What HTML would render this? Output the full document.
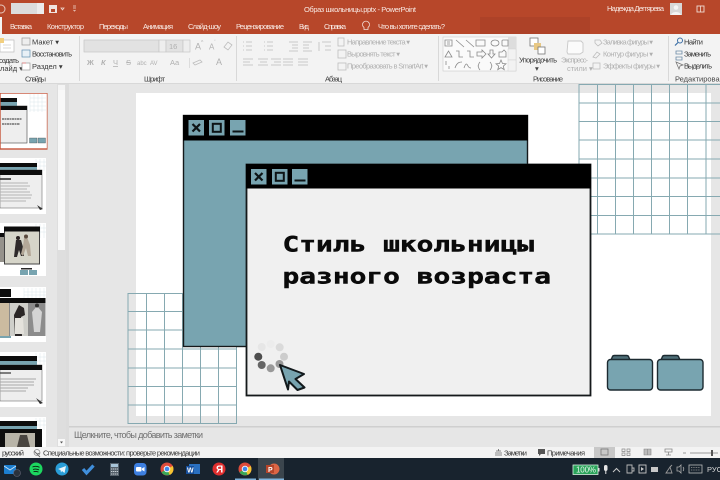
<!DOCTYPE html>
<html lang="ru"><head><meta charset="utf-8"><title>Образ школьницы.pptx - PowerPoint</title>
<style>
html,body{margin:0;padding:0;width:720px;height:480px;overflow:hidden;background:#e6e6e6}
svg{display:block;font-family:"Liberation Sans","Noto Sans CJK SC",sans-serif}
.w{fill:#f8e8e2;font-size:7.5px}
.d{fill:#3a3a3a;font-size:7.5px}
.g{fill:#b0b0b0;font-size:7.5px}
.l{fill:#444;font-size:7.5px}
.ic{fill:none;stroke:#8a8a8a;stroke-width:.8}
.dis{fill:none;stroke:#bdbdbd;stroke-width:.8}
.pix{font-family:'DejaVu Sans Mono','Liberation Mono',monospace;font-weight:bold;font-size:21px;fill:#0a0a0a;stroke:#0a0a0a;stroke-width:.45}
</style></head><body>
<svg width="720" height="480" viewBox="0 0 720 480" xmlns="http://www.w3.org/2000/svg">
<defs><filter id="b" x="0" y="0" width="100%" height="100%"><feGaussianBlur stdDeviation="0.3"/></filter></defs>

<!-- backgrounds -->
<rect width="720" height="480" fill="#e6e6e6"/>
<rect x="0" y="0" width="720" height="34" fill="#b7472a"/>
<rect x="480" y="17" width="110" height="17" fill="#ad4228"/>
<rect x="0" y="34" width="720" height="49" fill="#f3f3f3"/>
<rect x="0" y="83" width="720" height="1" fill="#d8d8d8"/>

<g filter="url(#b)">
<!-- title bar -->
<circle cx="1" cy="9" r="4" fill="none" stroke="#e8c8bd" stroke-width="1"/>
<rect x="11" y="3" width="33" height="11" fill="#dcdcdc"/>
<rect x="37" y="3" width="7" height="11" fill="#ececec"/>
<rect x="49" y="5" width="8" height="8" fill="#f0e4e0"/><rect x="51" y="9" width="4" height="3" fill="#b7472a"/>
<path d="M61 8h3l-1.500 2zM73 6h3M73 8h3M73.500 10l1 1 1-1" fill="none" stroke="#eed8d0" stroke-width=".8"/>
<text x="304" y="12" class="w" textLength="112">Образ школьницы.pptx  -  PowerPoint</text>
<text x="607" y="11" class="w" textLength="57">Надежда Дегтярева</text>
<rect x="670" y="3" width="12" height="12" fill="#d8d8d8"/><circle cx="676" cy="7.500" r="2.300" fill="#f4f4f4"/><path d="M671 15c1-4 9-4 10 0z" fill="#f4f4f4"/>
<rect x="697" y="6" width="7" height="6" fill="none" stroke="#f0dcd4" stroke-width=".9"/><path d="M700.500 6v6" stroke="#f0dcd4" stroke-width=".8"/>

<!-- tabs -->
<rect x="0" y="17" width="2" height="17" fill="#f3f3f3"/>
<text x="10" y="29" class="w" textLength="22">Вставка</text>
<text x="47" y="29" class="w" textLength="37">Конструктор</text>
<text x="99" y="29" class="w" textLength="29">Переходы</text>
<text x="143" y="29" class="w" textLength="30">Анимация</text>
<text x="188" y="29" class="w" textLength="33">Слайд-шоу</text>
<text x="236" y="29" class="w" textLength="48">Рецензирование</text>
<text x="299" y="29" class="w" textLength="10">Вид</text>
<text x="324" y="29" class="w" textLength="22">Справка</text>
<path d="M364 27.500a3.500 3.500 0 1 1 4 0v2h-4z" fill="none" stroke="#f2ddd5" stroke-width=".8"/>
<text x="378" y="29" class="w" textLength="67">Что вы хотите сделать?</text>

<!-- Слайды group -->
<rect x="0" y="40" width="14" height="12" fill="#fff" stroke="#bbb" stroke-width=".7"/>
<rect x="0" y="38" width="4" height="5" fill="#f2cf7f"/>
<path d="M3 45h8M3 48h8" stroke="#ccc" stroke-width=".8"/>
<text x="-1" y="63" class="d" textLength="20">оздать</text>
<text x="0" y="71" class="d">лайд ▾</text>
<rect x="22" y="38" width="8" height="7" fill="#eee" stroke="#999" stroke-width=".7"/>
<text x="32" y="44.500" class="d">Макет ▾</text>
<rect x="22" y="50" width="8" height="7" fill="#e8f0f6" stroke="#5f8db0" stroke-width=".7"/>
<text x="32" y="56.500" class="d" textLength="40">Восстановить</text>
<rect x="22" y="63" width="8" height="7" fill="#fff" stroke="#999" stroke-width=".7"/><path d="M22 63h4" stroke="#d88" stroke-width="1"/>
<text x="32" y="69" class="d">Раздел ▾</text>
<text x="25" y="81.500" class="l" textLength="21">Слайды</text>
<rect x="79" y="36" width="1" height="45" fill="#d8d8d8"/>

<!-- Шрифт -->
<rect x="84" y="40" width="75" height="12" fill="#e2e2e2" stroke="#c6c6c6" stroke-width=".7"/>
<rect x="159" y="40" width="7" height="12" fill="#eeeeee" stroke="#c6c6c6" stroke-width=".7"/>
<rect x="166" y="40" width="17" height="12" fill="#e2e2e2" stroke="#c6c6c6" stroke-width=".7"/>
<rect x="183" y="40" width="7" height="12" fill="#eeeeee" stroke="#c6c6c6" stroke-width=".7"/>
<text x="169" y="49" class="g">16</text>
<text x="195" y="49.500" class="g" style="font-size:9px">A</text><text x="201" y="44" class="g" style="font-size:5px">^</text>
<text x="209" y="49.500" class="g" style="font-size:8px">A</text><text x="214" y="44" class="g" style="font-size:5px">ˇ</text>
<path d="M224 47l4-5 4 3-4 5z" class="dis"/>
<g class="g" style="font-size:7.500px">
<text x="87" y="65" font-weight="bold">Ж</text><text x="101" y="65" font-style="italic" font-weight="bold">К</text><text x="113" y="65" text-decoration="underline">Ч</text><text x="126" y="65" text-decoration="line-through">S</text><text x="137" y="65" style="font-size:6px">abc</text><text x="150" y="65" style="font-size:6px">AV</text><text x="170" y="65">Aa</text><text x="216" y="65" style="font-size:9px">A</text>
</g>
<path d="M193 63l7-3 2 2-7 3z" class="dis" stroke-width="1.200"/>
<rect x="189" y="58" width="1" height="10" fill="#dcdcdc"/>
<text x="144" y="81.500" class="l" textLength="21">Шрифт</text>
<rect x="236" y="36" width="1" height="45" fill="#d8d8d8"/>

<!-- Абзац -->
<path class="dis" d="M243 42h1M246 42h6M243 46h1M246 46h6M243 50h1M246 50h6M264 42h1M267 42h6M264 46h1M267 46h6M264 50h1M267 50h6M289 42h9M292 45h6M292 48h6M289 51h9M303 42h9M303 45h6M303 48h6M303 51h9M322 42h9M325 46h6M325 50h6M319 42v9"/>
<path class="dis" d="M243 59h10M243 62h7M243 65h10M258 59h10M260 62h7M258 65h10M271 59h10M274 62h7M271 65h10M283 59h10M283 62h10M283 65h10M298 59h10M298 62h10M298 65h10"/>
<rect x="338" y="38" width="6" height="8" class="dis"/><rect x="338" y="50" width="8" height="8" class="dis"/><rect x="338" y="63" width="8" height="7" class="dis"/>
<text x="347" y="44.500" class="g" textLength="63">Направление текста ▾</text>
<text x="347" y="56.500" class="g" textLength="53">Выровнять текст ▾</text>
<text x="347" y="68.500" class="g" textLength="81">Преобразовать в SmartArt ▾</text>
<text x="325" y="81.500" class="l" textLength="17">Абзац</text>
<rect x="438" y="36" width="1" height="45" fill="#d8d8d8"/>

<!-- Рисование -->
<rect x="443" y="37" width="73" height="34" fill="#fafafa" stroke="#d0d0d0" stroke-width=".7"/>
<rect x="508" y="37" width="8" height="12" fill="#dddddd"/>
<rect x="508" y="49" width="8" height="11" fill="#f2f2f2" stroke="#d0d0d0" stroke-width=".5"/>
<rect x="508" y="60" width="8" height="11" fill="#f2f2f2" stroke="#d0d0d0" stroke-width=".5"/>
<path class="ic" d="M445 40h7v6h-7zM447 42h3M447 44h3M456 40l8 7M466 40l8 7M476 40h9v6h-9zM491 43a4 3 0 1 0 8 0a4 3 0 1 0-8 0M502 41a1 1 0 0 1 1-1h5v6h-5a1 1 0 0 1-1-1z"/>
<path class="ic" d="M445 57l3.500-6 3.500 6zM456 51h3v6h4M467 51h3v6h4M477 52h5v-2l4 4-4 4v-2h-5zM490 50h3v4h2l-3.500 4-3.500-4h2zM499 57v-5h3l2-2 2 2v5z"/>
<path class="ic" d="M446 61v4M449 66v3M455 68c2-6 5-6 7-6M464 68c2-6 3-4 4-2s2 2 3 2M480 62c-2 2-1 3-2 4 1 1 0 2 2 4M490 62c2 2 1 3 2 4-1 1 0 2-2 4M501 60l1.500 3.500 3.500.3-2.700 2.300.9 3.500-3.200-2-3.200 2 .9-3.500-2.700-2.300 3.500-.3z"/>
<rect x="530" y="38" width="8" height="8" fill="#fff" stroke="#777" stroke-width=".8"/>
<rect x="534" y="43" width="7" height="7" fill="#e8c884"/>
<rect x="538" y="47" width="7" height="7" fill="#fff" stroke="#777" stroke-width=".8"/>
<text x="519" y="62.500" class="d" textLength="38">Упорядочить</text>
<text x="535" y="71" class="l">▾</text>
<path d="M568 41h13l2 2v9l-3 2h-12l-1-2z" fill="#fbfbfb" stroke="#c8c8c8" stroke-width=".9"/>
<text x="561" y="62.500" class="g" textLength="27">Экспресс-</text>
<text x="567" y="71" class="g">стили ▾</text>
<path class="dis" d="M595 40h5l2 3-4 3-3-3zM593 57l4-5 3 2-4 4zM593 63h7v6h-7z"/>
<text x="603" y="44.500" class="g" textLength="50">Заливка фигуры ▾</text>
<text x="603" y="56.500" class="g" textLength="50">Контур фигуры ▾</text>
<text x="603" y="68.500" class="g" textLength="57">Эффекты фигуры ▾</text>
<text x="533" y="81.500" class="l" textLength="30">Рисование</text>
<rect x="668" y="36" width="1" height="45" fill="#d8d8d8"/>

<!-- Редактирование -->
<circle cx="680" cy="40.500" r="2.500" fill="none" stroke="#3a6ea5" stroke-width="1"/><path d="M678 42.500l-3 3" stroke="#3a6ea5" stroke-width="1.200"/>
<path d="M676 51h6v3h-6zM676 57h6v3h-6z" fill="none" stroke="#6b8aa5" stroke-width=".8"/>
<path d="M676 62l3 7 1-3 3-1z" fill="none" stroke="#777" stroke-width=".8"/>
<text x="684" y="44.500" class="d" textLength="19">Найти</text>
<text x="684" y="56.500" class="d" textLength="27">Заменить</text>
<text x="684" y="68.500" class="d" textLength="28">Выделить</text>
<text x="675" y="81.500" class="l">Редактирования</text>
</g>

<!-- thumbnail pane -->
<rect x="57" y="84" width="9" height="363" fill="#dedede"/>
<rect x="58" y="90" width="7" height="160" fill="#f8f8f8"/>
<rect x="58" y="85" width="7" height="5" fill="#f4f4f4"/>
<rect x="58" y="439" width="7" height="7" fill="#f8f8f8"/><path d="M60 441.500h3l-1.500 2z" fill="#555"/>
<rect x="66" y="84" width="3" height="363" fill="#dcdcdc"/>

<g filter="url(#b)">
<!-- thumb 1 -->
<rect x="0" y="93" width="47" height="56" fill="#fff"/>
<path d="M30 94v18M34 94v18M38 94v18M42 94v18M30 98h16M30 102h16M30 106h16M30 110h16" stroke="#dbe7ea" stroke-width=".5"/>
<rect x="0" y="98" width="17" height="4" fill="#0a0a0a"/><rect x="0" y="102" width="17" height="4" fill="#78a4b0"/>
<rect x="0" y="106" width="27" height="37" fill="#eeeeee" stroke="#444" stroke-width=".6"/><rect x="0" y="106" width="27" height="4" fill="#0a0a0a"/>
<path d="M2 119h20M2 124h18" stroke="#555" stroke-width="1.200" stroke-dasharray="2 .5"/>
<rect x="29.500" y="138" width="7.500" height="5" fill="#78a4b0" stroke="#333" stroke-width=".3"/><rect x="38" y="138" width="7.500" height="5" fill="#78a4b0" stroke="#333" stroke-width=".3"/>
<rect x="0" y="93" width="47.500" height="56" fill="none" stroke="#c6553a" stroke-width="1.400"/>

<!-- thumb 2 -->
<rect x="0" y="158" width="46" height="56" fill="#fff"/>
<path d="M36 159v12M40 159v12M44 159v12M36 162h10M36 166h10" stroke="#dbe7ea" stroke-width=".5"/>
<rect x="0" y="163" width="37" height="4" fill="#0a0a0a"/><rect x="0" y="167" width="37" height="3" fill="#78a4b0"/>
<rect x="0" y="170" width="42" height="38" fill="#eeeeee" stroke="#555" stroke-width=".5"/><rect x="0" y="170" width="42" height="5" fill="#0a0a0a"/>
<path d="M0 179h11" stroke="#333" stroke-width="1.600"/>
<path d="M0 183h28M0 186h30M0 189h27M0 192h30M0 195h32M0 198h31M0 201h26" stroke="#b4b4b4" stroke-width="1"/>
<path d="M37 205l6 4-3 1z" fill="#333"/>

<!-- thumb 3 -->
<rect x="0" y="223" width="46" height="53" fill="#fff"/>
<path d="M36 224v14M40 224v14M44 224v14M36 228h10M36 232h10" stroke="#dbe7ea" stroke-width=".5"/>
<rect x="0" y="233" width="5" height="4" fill="#0a0a0a"/>
<rect x="0" y="237" width="4" height="25" fill="#95928b"/>
<rect x="4" y="226.500" width="36" height="38" fill="#444"/>
<rect x="4" y="226.500" width="36" height="5" fill="#0a0a0a"/>
<rect x="5" y="231.500" width="34" height="32" fill="#d6d5c9"/>
<path d="M16 240l5 0 2 7 1 9h-3l-2-6-2 7h-3l1-9z" fill="#2f2b2a"/><circle cx="18" cy="238" r="2" fill="#2a2422"/>
<path d="M24 238l3-1 3 8 1 11h-3l-2-8-3 8-2-2 2-8z" fill="#b4a898"/><circle cx="26" cy="236.500" r="2" fill="#5a4a3e"/>
<rect x="21" y="268" width="11" height="1.500" fill="#2a2a2a"/>
<rect x="20" y="270" width="8" height="5" fill="#78a4b0"/><rect x="29" y="270" width="8" height="5" fill="#78a4b0"/>

<!-- thumb 4 -->
<rect x="0" y="287" width="46" height="55" fill="#fff"/>
<path d="M24 288v10M28 288v10M32 288v10M36 288v10M40 288v10M44 288v10M24 292h22M24 295h22" stroke="#dbe7ea" stroke-width=".5"/>
<rect x="0" y="289" width="11" height="8" fill="#0a0a0a"/>
<rect x="0" y="298" width="45.500" height="5" fill="#0a0a0a"/>
<rect x="0" y="303" width="45.500" height="33" fill="#8a8a8a"/>
<rect x="0" y="303" width="9" height="33" fill="#cbbba0"/>
<rect x="10" y="303" width="18" height="33" fill="#cfcfca"/>
<path d="M14 315l5-10 5 3 1 7-4 2 1 19h-7z" fill="#2a2626"/><path d="M15 318h8l1 16h-9z" fill="#e4e2dc"/>
<rect x="29" y="303" width="16" height="33" fill="#8c8c8c"/>
<path d="M32 312l5-6 5 6-1 10-1 10h-6l-1-10z" fill="#d4d4d4"/><circle cx="37" cy="305.500" r="2" fill="#333"/>
<rect x="0" y="336" width="11" height="2" fill="#78a4b0"/>

<!-- thumb 5 -->
<rect x="0" y="352" width="46" height="55" fill="#fff"/>
<path d="M36 353v12M40 353v12M44 353v12M36 357h10M36 361h10" stroke="#dbe7ea" stroke-width=".5"/>
<rect x="0" y="356" width="37" height="5" fill="#0a0a0a"/><rect x="0" y="361" width="37" height="4" fill="#78a4b0"/>
<rect x="0" y="365" width="42" height="36" fill="#eeeeee" stroke="#555" stroke-width=".5"/><rect x="0" y="365" width="42" height="5" fill="#0a0a0a"/>
<path d="M0 373h11" stroke="#333" stroke-width="1.200"/>
<path d="M0 379h36M0 382h34M0 385h34M0 388h28M0 391h26" stroke="#a8a8a8" stroke-width="1"/>
<path d="M36 398l7 5-3 1z" fill="#333"/>

<!-- thumb 6 -->
<rect x="0" y="417" width="46" height="30" fill="#fff"/>
<path d="M36 418v12M40 418v12M44 418v12M36 421h10M36 425h10" stroke="#dbe7ea" stroke-width=".5"/>
<rect x="0" y="421" width="37" height="5" fill="#0a0a0a"/><rect x="0" y="426" width="37" height="3" fill="#78a4b0"/>
<rect x="0" y="429" width="42" height="18" fill="#0a0a0a"/>
<rect x="5" y="433" width="30" height="14" fill="#b8b4a8"/><path d="M17 447l3-12h7l3 12z" fill="#4a4440"/>
</g>

<!-- Slide -->
<rect x="136" y="93" width="575" height="323" fill="#ffffff"/>
<path d="M579 84v150M597.500 84v150M615.500 84v150M633.500 84v150M651.500 84v150M669.500 84v150M687.500 84v150M706 84v150M579 84.500h141M579 103h141M579 121.500h141M579 140h141M579 159h141M579 178h141M579 196.500h141M579 215.500h141M579 234h141" fill="none" stroke="#86a9b1" stroke-width="1"/>
<path d="M128 293v131M146.500 293v131M164.500 293v131M182.500 293v131M200.500 293v131M218.500 293v131M236.500 293v131M128 293.500h108.500M128 311.500h108.500M128 330h108.500M128 349h108.500M128 368h108.500M128 386.500h108.500M128 405h108.500M128 423.500h108.500" fill="none" stroke="#86a9b1" stroke-width="1"/>

<!-- back window -->
<rect x="183.500" y="115.500" width="344" height="231" fill="#78a4b0" stroke="#15191b" stroke-width="1.400"/>
<rect x="183" y="115" width="345" height="25.500" fill="#000"/>
<g>
<rect x="188.500" y="120" width="15.500" height="15.500" fill="#78a4b0"/><path d="M192.500 124l7.500 7.500M200 124l-7.500 7.500" stroke="#0d1416" stroke-width="2.200"/>
<rect x="209" y="120" width="15.500" height="15.500" fill="#78a4b0"/><rect x="212.800" y="123.800" width="8" height="8" fill="none" stroke="#0d1416" stroke-width="2"/>
<rect x="230" y="120" width="15.500" height="15.500" fill="#78a4b0"/><path d="M232.500 131.500h11" stroke="#0d1416" stroke-width="2"/>
</g>

<!-- front window -->
<rect x="246.500" y="164.500" width="344" height="231" fill="#f0f0f0" stroke="#15191b" stroke-width="1.800"/>
<rect x="246" y="164" width="345" height="24.500" fill="#000"/>
<rect x="251" y="169" width="15.500" height="15.500" fill="#78a4b0"/><path d="M255 173l7.500 7.500M262.500 173l-7.500 7.500" stroke="#0d1416" stroke-width="2.200"/>
<rect x="272" y="169" width="15.500" height="15.500" fill="#78a4b0"/><rect x="275.800" y="172.800" width="8" height="8" fill="none" stroke="#0d1416" stroke-width="2"/>
<rect x="292" y="169" width="15.500" height="15.500" fill="#78a4b0"/><path d="M294.500 180.500h11" stroke="#0d1416" stroke-width="2"/>

<text x="282.500" y="251.500" textLength="251.500" lengthAdjust="spacingAndGlyphs" class="pix">Стиль школьницы</text>
<text x="282.500" y="283.500" textLength="268.500" lengthAdjust="spacingAndGlyphs" class="pix">разного возраста</text>

<!-- spinner -->
<circle cx="270.700" cy="344" r="4" fill="#ececec"/><circle cx="261.700" cy="347" r="4" fill="#e6e6e6"/>
<circle cx="279.700" cy="347.300" r="4" fill="#dadada"/><circle cx="284" cy="356.700" r="4" fill="#cccccc"/>
<circle cx="279.500" cy="364" r="4" fill="#999"/><circle cx="270.700" cy="368.300" r="4" fill="#999999"/>
<circle cx="261.700" cy="365" r="4" fill="#666"/><circle cx="258.300" cy="356.700" r="4" fill="#4e4e4e"/>
<!-- cursor -->
<path d="M280 365L304 374L295.500 379L304.500 387.500L297.500 390L289 381.500L288 389.500Z" fill="#78a4b0" stroke="#12191c" stroke-width="2" stroke-linejoin="round"/>

<!-- folders -->
<g stroke="#1c2a30" stroke-width="1.400" stroke-linejoin="round">
<path d="M611 360l1.500-3.500q.5-1 2-1h12q1.500 0 2 1l1.500 3.500z" fill="#4f6f79"/>
<rect x="607.500" y="359.500" width="45" height="30.500" rx="3" fill="#78a4b0"/>
<path d="M661 360l1.500-3.500q.5-1 2-1h12q1.500 0 2 1l1.500 3.500z" fill="#4f6f79"/>
<rect x="657.500" y="359.500" width="45.500" height="30.500" rx="3" fill="#78a4b0"/>
</g>

<!-- notes -->
<rect x="69" y="426" width="651" height="1.500" fill="#cfcfcf"/>
<rect x="0" y="447" width="720" height="11" fill="#f3f3f3"/>
<g filter="url(#b)">
<text x="74" y="438" textLength="129" style="font-size:9px;fill:#707070">Щелкните, чтобы добавить заметки</text>

<!-- status bar -->
<text x="2" y="455.500" class="d" textLength="22">русский</text>
<path d="M34 451l3 3 3-1M37 454l3 3" fill="none" stroke="#666" stroke-width=".9"/><circle cx="37" cy="452.500" r="3" fill="none" stroke="#888" stroke-width=".7"/>
<text x="43" y="455.500" class="d" textLength="157">Специальные возможности: проверьте рекомендации</text>
<path d="M496 451h5M495 453h7M495 455h7M498.500 449v2" fill="none" stroke="#666" stroke-width=".8"/>
<text x="504" y="455.500" class="d" textLength="23">Заметки</text>
<path d="M538 449h7v5h-4l-2 2v-2h-1z" fill="#555"/>
<text x="547" y="455.500" class="d" textLength="38">Примечания</text>
<rect x="594" y="447" width="21" height="11" fill="#c8c8c8"/>
<rect x="601" y="449" width="7" height="6" fill="none" stroke="#777" stroke-width=".8"/>
<path d="M622 449h3v2.500h-3zM627 449h3v2.500h-3zM622 453h3v2.500h-3zM627 453h3v2.500h-3z" fill="none" stroke="#888" stroke-width=".7"/>
<path d="M644 449h7v6h-7zM647.500 449v6" fill="#bbb" stroke="#888" stroke-width=".6"/>
<path d="M665 449h7v3h-7zM668.500 452v3M666 455h5" fill="none" stroke="#888" stroke-width=".8"/>
<path d="M683 453h3M690 453h28" stroke="#999" stroke-width=".9"/><rect x="711" y="450" width="2" height="6" fill="#555"/>
</g>

<!-- taskbar -->
<rect x="0" y="458" width="720" height="22" fill="#18232e"/>
<g filter="url(#b)">
<rect x="258" y="458" width="26" height="22" fill="#3a444e"/>
<rect x="235" y="478.500" width="21" height="1.500" fill="#7fb4dc"/>
<rect x="259" y="478.500" width="25" height="1.500" fill="#7fb4dc"/>
<!-- mail -->
<rect x="4" y="465" width="12" height="9" rx="1" fill="#1f7fd0"/><path d="M4 466l6 4 6-4" fill="none" stroke="#cfe6f8" stroke-width=".8"/><circle cx="17" cy="473" r="3.500" fill="#2a333c" stroke="#667" stroke-width=".6"/>
<!-- spotify -->
<circle cx="36" cy="469" r="6.500" fill="#1ed760"/><path d="M32.500 467c2.500-1 5-.8 7 .3M33 469.500c2-.7 4-.5 6 .4M33.500 471.700c1.700-.5 3.300-.4 5 .4" fill="none" stroke="#0b1a10" stroke-width=".9"/>
<!-- telegram -->
<circle cx="62" cy="469" r="6.500" fill="#2a9ed8"/><path d="M58 469l8-3-1.500 7-2.500-2-1 1.500-.5-2.500z" fill="#eaf6fc"/>
<!-- check -->
<path d="M83 469l3.500 4 7-7.500" fill="none" stroke="#3f8fdc" stroke-width="3.200"/>
<!-- calc -->
<rect x="110" y="463" width="9" height="13" fill="#55606a"/><rect x="111" y="464" width="7" height="3" fill="#a8c4d8"/>
<path d="M111 469h7M111 471.500h7M111 474h7" stroke="#c6ced4" stroke-width="1.100" stroke-dasharray="1.400 .6"/>
<!-- zoom -->
<rect x="134" y="463" width="12.500" height="12.500" rx="3.500" fill="#3d7fe0"/><rect x="136" y="467" width="5.500" height="4.500" rx="1" fill="#fff"/><path d="M142 468.500l2.500-1.500v4.500l-2.500-1.500z" fill="#fff"/>
<!-- chrome 1 -->
<circle cx="167" cy="469" r="6.500" fill="#dd4b3a"/><path d="M167 469l5.600 3.200a6.500 6.500 0 0 1-11.200 0z" fill="#3aa757"/><path d="M172.700 466a6.500 6.500 0 0 1-3 8.900L167 469z" fill="#f6c533"/><circle cx="167" cy="469" r="2.800" fill="#3f86ea" stroke="#fff" stroke-width=".9"/>
<!-- word -->
<rect x="189" y="464" width="11" height="10" fill="#2b6fc0"/><rect x="186" y="466" width="8" height="8" fill="#174f9c"/><text x="187" y="472.500" style="font-size:7px;fill:#fff;font-weight:bold">W</text>
<!-- yandex -->
<circle cx="219" cy="469" r="6.500" fill="#e02d2d"/><text x="216" y="472.500" style="font-size:10px;fill:#fff;font-weight:bold">Я</text>
<!-- chrome 2 -->
<circle cx="245" cy="469" r="6.500" fill="#dd4b3a"/><path d="M245 469l5.600 3.200a6.500 6.500 0 0 1-11.200 0z" fill="#3aa757"/><path d="M250.700 466a6.500 6.500 0 0 1-3 8.900L245 469z" fill="#f6c533"/><circle cx="245" cy="469" r="2.800" fill="#3f86ea" stroke="#fff" stroke-width=".9"/>
<!-- ppt -->
<circle cx="274" cy="469" r="5.500" fill="#dd6644"/><rect x="266" y="465" width="8" height="8" fill="#b5442a"/><text x="268" y="472" style="font-size:7px;fill:#fff;font-weight:bold">P</text>
<!-- tray -->
<rect x="573" y="465" width="25" height="9.500" fill="#2aa45a" stroke="#d8eee0" stroke-width=".8"/><rect x="598" y="468" width="1.500" height="3.500" fill="#e0e0e0"/>
<text x="576" y="472.500" style="font-size:8px;fill:#e8f5ec" textLength="20">100%</text>
<rect x="604" y="465" width="3.500" height="6" rx="1.700" fill="#e6e6e6"/><path d="M605.800 471v3" stroke="#e6e6e6" stroke-width="1"/>
<path d="M613 472l3.500-3.500 3.500 3.500" fill="none" stroke="#c8c8c8" stroke-width="1"/>
<path d="M627 465h5v8h-5zM632 468h2v3h-2" fill="none" stroke="#b8b8b8" stroke-width=".9"/>
<rect x="639" y="465" width="7" height="8" fill="none" stroke="#c8c8c8" stroke-width=".9"/><path d="M641 467l3 2-3 2z" fill="#c8c8c8"/>
<rect x="651" y="467" width="7" height="5" fill="#c8c8c8"/>
<path d="M666 473l4-6 2 6zM670 467l2-2" fill="none" stroke="#9a9a9a" stroke-width=".9"/>
<path d="M677 467v4h2l2 2v-8l-2 2zM683 467c1 1 1 3 0 4" fill="none" stroke="#aaa" stroke-width=".8"/>
<rect x="689" y="465" width="13" height="8" fill="none" stroke="#bbb" stroke-width=".8"/><path d="M691 467.500h9M691 470h9" stroke="#999" stroke-width=".7" stroke-dasharray="1 .7"/>
<text x="707" y="472" style="font-size:7.500px;fill:#d8d8d8">РУС</text>
</g>
</svg>
</body></html>
